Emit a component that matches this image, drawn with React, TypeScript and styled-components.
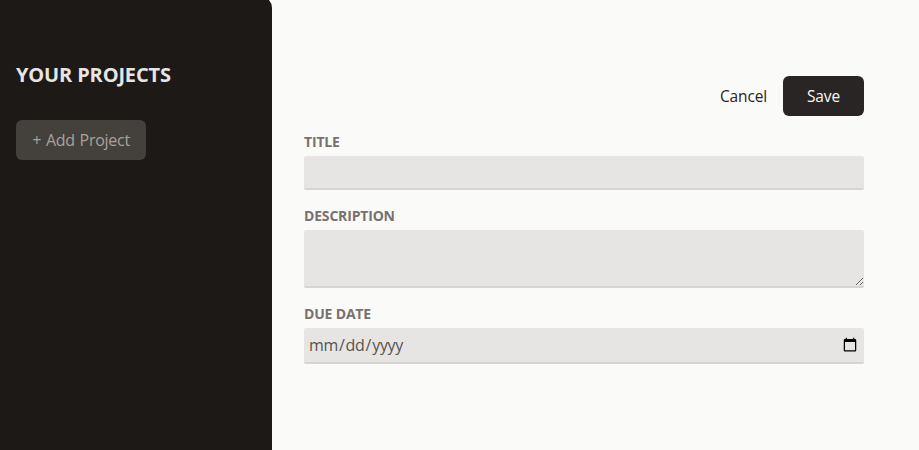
import React from "react";
import styled, { createGlobalStyle, css } from "styled-components";

const GlobalStyle = createGlobalStyle`
  *, *::before, *::after { box-sizing: border-box; }
  body { margin: 0; background: #fafaf9; font-family: "Open Sans", "Noto Sans", sans-serif; }
  button, input, textarea { font: inherit; }
`;
const Page = styled.main`
  display: flex;
  gap: 32px;
  height: 450px;
  overflow: hidden;
  background: #fafaf9;
`;
const Sidebar = styled.aside`
  width: 272px;
  margin-top: -4px;
  padding: 65px 16px 0;
  background: #1c1917;
  border-top-right-radius: 12px;
`;
const Heading = styled.h2`
  margin: 0 0 31px;
  font-size: 20px;
  line-height: 28px;
  font-weight: 700;
  letter-spacing: -0.15px;
  color: #e7e5e4;
  white-space: nowrap;
`;
const Button = styled.button`
  height: 40px;
  padding: 0;
  border: 0;
  border-radius: 6px;
  font-size: 15.5px;
  letter-spacing: -0.15px;
  white-space: nowrap;
`;
const AddButton = styled(Button)`
  width: 130px;
  font-size: 16px;
  letter-spacing: -0.28px;
  word-spacing: 1px;
  background: #44403c;
  color: #a8a29e;
`;
const CancelButton = styled(Button)`
  background: transparent;
  color: #292524;
`;
const SaveButton = styled(Button)`
  width: 81px;
  background: #292524;
  color: #fafaf9;
`;
const Form = styled.form`
  width: 560px;
  padding-top: 76px;
`;
const Actions = styled.div`
  display: flex;
  justify-content: flex-end;
  gap: 16px;
  margin-bottom: 16px;
`;
const Field = styled.label`
  display: flex;
  flex-direction: column;
  gap: 4px;
  margin-bottom: 16px;
`;
const Label = styled.span`
  height: 20px;
  font-size: 14px;
  line-height: 20px;
  font-weight: 700;
  letter-spacing: -0.18px;
  color: #78716c;
`;
const control = css`
  display: block;
  width: 100%;
  margin: 0;
  padding: 4px;
  border: 0;
  border-bottom: 2px solid #d6d3d1;
  border-radius: 2px;
  outline: 0;
  background: #e7e5e4;
  color: #57534e;
  font-size: 16px;
  line-height: 24px;
`;
const TextInput = styled.input`
  ${control}
  height: 34px;
`;
const DateInput = styled.input`
  ${control}
  height: 36px;
  letter-spacing: -0.3px;
`;
const TextArea = styled.textarea`
  ${control}
  height: 58px;
`;

export default function App() {
  return (
    <>
      <GlobalStyle />
      <Page>
        <Sidebar>
          <Heading>YOUR PROJECTS</Heading>
          <AddButton>+ Add Project</AddButton>
        </Sidebar>
        <Form>
          <Actions>
            <CancelButton type="button">Cancel</CancelButton>
            <SaveButton type="button">Save</SaveButton>
          </Actions>
          <Field>
            <Label>TITLE</Label>
            <TextInput type="text" />
          </Field>
          <Field>
            <Label>DESCRIPTION</Label>
            <TextArea />
          </Field>
          <Field>
            <Label>DUE DATE</Label>
            <DateInput type="date" />
          </Field>
        </Form>
      </Page>
    </>
  );
}
